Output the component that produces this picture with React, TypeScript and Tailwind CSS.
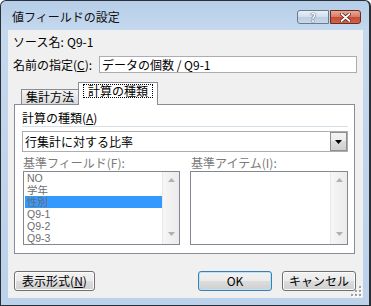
import React from 'react';

const font = "font-['Noto_Sans_CJK_JP',sans-serif]";

const ScrollArrow = ({ up }: { up?: boolean }) => (
  <svg width="7" height="4" viewBox="0 0 7 4">
    <path d={up ? 'M0 4 L3.5 0 L7 4 Z' : 'M0 0 L3.5 4 L7 0 Z'} fill="#b0b0b0" />
  </svg>
);

const ScrollBar = () => (
  <div className="flex w-[17px] flex-col items-center justify-between border-l border-[#e8e8e8] bg-gradient-to-r from-[#f6f6f6] to-[#ebebeb] pt-[6px] pb-[8px]">
    <ScrollArrow up />
    <ScrollArrow />
  </div>
);

const ListBox = ({ items, selected, className }: { items: string[]; selected?: number; className: string }) => (
  <div className={`flex h-[74px] border border-[#828790] bg-white ${className}`}>
    <div className="flex flex-1 flex-col pl-[1px]">
      {items.map((item, i) => (
        <div
          key={item}
          className={`h-[12px] pl-[2px] font-['Liberation_Sans','Noto_Sans_CJK_JP',sans-serif] text-[10.5px] leading-[12px] text-[#6d6d6d] ${
            i === selected ? 'bg-[#3399ff]' : ''
          }`}
        >
          {item}
        </div>
      ))}
    </div>
    <ScrollBar />
  </div>
);

const Button = ({ children, className, primary }: { children: React.ReactNode; className: string; primary?: boolean }) => (
  <div
    className={`flex h-[20px] items-center justify-center rounded-[3px] border bg-[linear-gradient(#f2f2f2_0%,#ebebeb_50%,#dddddd_50%,#cfcfcf_100%)] leading-[14px] ${
      primary ? 'border-[#3c7fb1] shadow-[inset_0_0_0_1px_#b9e3f9]' : 'border-[#707070] shadow-[inset_0_0_0_1px_#fbfbfb]'
    } ${className}`}
  >
    {children}
  </div>
);

const SizeGrip = () => (
  <svg width="11" height="11" viewBox="0 0 11 11">
    {[
      [8, 0],
      [8, 4],
      [4, 4],
      [8, 8],
      [4, 8],
      [0, 8],
    ].map(([x, y]) => (
      <g key={`${x}-${y}`}>
        <rect x={x + 1} y={y + 1} width="2" height="2" fill="#ffffff" />
        <rect x={x} y={y} width="2" height="2" fill="#a0a0a0" />
      </g>
    ))}
  </svg>
);

const App = () => {
  return (
    <div className={`h-[306px] w-[371px] ${font} text-[12px] text-black`}>
      <div className="flex h-full flex-col rounded-t-[6px] border border-r-2 border-[#2b3038] bg-[linear-gradient(#b6cee8,#c4d8ee_28px,#bcd2ea)] pr-[6px] pb-[7px] pl-[7px]">
        {/* title bar */}
        <div className="flex h-[29px] items-start justify-between pr-[2px] pl-[4px]">
          <span className="mt-[9px] leading-[14px] text-[#111]">値フィールドの設定</span>
          <div className="mt-[9px] flex h-[14px] gap-[1px]">
            <div className="flex w-[32px] items-center justify-center rounded-l-[3px] border border-[#6b7a8e] bg-[linear-gradient(#e8eff7,#d3dfed_50%,#bccde2_50%,#c9d8ea)]">
              <span className="text-[11px] leading-[11px] font-bold text-white [text-shadow:0_0_1px_#2c3e55,0_0_1px_#2c3e55]">?</span>
            </div>
            <div className="flex w-[31px] items-center justify-center rounded-r-[3px] border border-[#6e2a1f] bg-[linear-gradient(#e8a898,#d77a66_50%,#c44a34_50%,#d0654c)]">
              <svg width="11" height="9" viewBox="0 0 11 9">
                <path d="M1.5 1 L9.5 8 M9.5 1 L1.5 8" stroke="#5a1c12" strokeWidth="3.4" strokeLinecap="round" />
                <path d="M1.5 1 L9.5 8 M9.5 1 L1.5 8" stroke="#ffffff" strokeWidth="1.8" strokeLinecap="round" />
              </svg>
            </div>
          </div>
        </div>

        {/* client */}
        <div className="relative flex h-[268px] flex-col bg-[#f0f0f0]">
          <div className="mt-[5px] flex h-[14px] pl-[5px] leading-[14px]">
            <span className="w-[52px] shrink-0 whitespace-nowrap">ソース名:</span>
            <span className="ml-[2px]">Q9-1</span>
          </div>

          <div className="mt-[7px] flex h-[17px] items-center pl-[5px]">
            <span className="w-[86px] leading-[14px]">
              名前の指定(<u className="underline-offset-1">C</u>):
            </span>
            <div className="flex h-[17px] w-[258px] items-center border border-[#abadb3] bg-white pl-[2px] leading-[14px]">
              データの個数 / Q9-1
            </div>
          </div>

          {/* tabs */}
          <div className="mt-[9px] ml-[6px] flex w-[341px] flex-col">
            <div className="flex h-[22px] items-end pl-[7px]">
              <div className="flex h-[15px] w-[58px] items-center justify-center border border-b-0 border-[#898c95] bg-[linear-gradient(#f3f3f3,#e7e7e7_50%,#dadada)] leading-[12px]">
                集計方法
              </div>
              <div className="relative z-10 -mb-px -ml-px flex h-[23px] w-[80px] justify-center border border-b-0 border-[#898c95] bg-white pt-[1px]">
                <div className="flex h-[14px] items-center border border-dotted border-black px-[4px] leading-[12px]">計算の種類</div>
              </div>
            </div>

            <div className="flex h-[150px] flex-col border border-[#898c95] bg-white pt-[6px] pl-[7px]">
              <div className="h-[14px] leading-[14px]">
                計算の種類(<u className="underline-offset-1">A</u>)
              </div>
              <div className="mt-[1px] h-px w-[326px] bg-[#d5dfe5]" />
              <div className="mt-[4px] flex h-[21px] w-[326px] items-center border border-[#abadb3] bg-white pl-[2px]">
                <span className="leading-[14px]">行集計に対する比率</span>
                <div className="ml-auto flex h-full w-[17px] items-center justify-center border border-[#8e8f8f] bg-[linear-gradient(#f4f4f4,#ebebeb_50%,#dcdcdc_50%,#d0d0d0)]">
                  <svg width="7" height="4" viewBox="0 0 7 4">
                    <path d="M0 0 L3.5 4 L7 0 Z" fill="#000" />
                  </svg>
                </div>
              </div>

              <div className="mt-[4px] flex gap-[10px] pl-[1px]">
                <div className="flex flex-col">
                  <div className="h-[14px] leading-[14px] text-[#7a7a7a]">基準フィールド(F):</div>
                  <ListBox
                    className="mt-[1px] w-[157px]"
                    items={['NO', '学年', '性別', 'Q9-1', 'Q9-2', 'Q9-3']}
                    selected={2}
                  />
                </div>
                <div className="flex flex-col">
                  <div className="h-[14px] pl-[1px] leading-[14px] text-[#7a7a7a]">基準アイテム(I):</div>
                  <ListBox className="mt-[1px] w-[158px]" items={[]} />
                </div>
              </div>
            </div>
          </div>

          {/* buttons */}
          <div className="mt-[17px] flex pr-[7px] pl-[6px]">
            <Button className="w-[81px]">
              表示形式(<u className="underline-offset-1">N</u>)
            </Button>
            <Button className="ml-auto w-[74px]" primary>
              OK
            </Button>
            <Button className="ml-[10px] w-[74px]">キャンセル</Button>
          </div>

          <div className="absolute right-[1px] bottom-[1px]">
            <SizeGrip />
          </div>
        </div>
      </div>
    </div>
  );
};

export default App;
